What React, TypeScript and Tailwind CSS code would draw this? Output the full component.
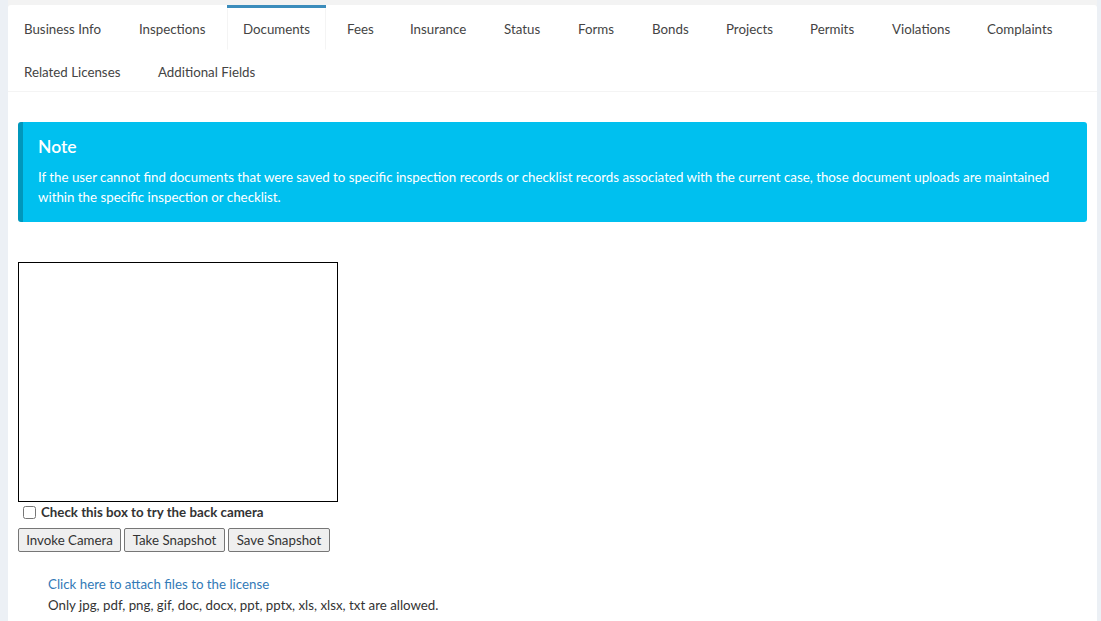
import React from "react";

type Tab = { label: string; w: number; active?: boolean };

const tabs: Tab[] = [
  { label: "Business Info", w: 110 },
  { label: "Inspections", w: 99 },
  { label: "Documents", w: 99, active: true },
  { label: "Fees", w: 58 },
  { label: "Insurance", w: 89 },
  { label: "Status", w: 69 },
  { label: "Forms", w: 69 },
  { label: "Bonds", w: 69 },
  { label: "Projects", w: 79 },
  { label: "Permits", w: 77 },
  { label: "Violations", w: 90 },
  { label: "Complaints", w: 99 },
  { label: "Related Licenses", w: 129 },
  { label: "Additional Fields", w: 130 },
];

export default function App() {
  return (
    <div className="flex min-h-[621px] w-[1101px] bg-[#ecf0f5] font-[Lato,sans-serif] text-[13.3px] text-[#333]">
      <div className="w-[8px] shrink-0" />
      <div className="flex w-[1089px] flex-col bg-[#f3f3f3] pt-[5px]">
        <div className="flex-1 rounded-t-[3px] bg-white">
          <ul className="flex flex-wrap gap-x-[5px] border-b border-[#f4f4f4]">
            {tabs.map((t) => (
              <li
                key={t.label}
                style={{ width: t.w }}
                className={`-mb-[2px] h-[45px] border-t-[3px] ${
                  t.active ? "border-[#3c8dbc]" : "border-transparent"
                }`}
              >
                <a
                  className={`block h-[42px] whitespace-nowrap border px-[15px] py-[10px] leading-[20px] ${
                    t.active
                      ? "border-x-[#f4f4f4] border-t-transparent border-b-transparent bg-white text-[#444]"
                      : "border-transparent text-[#444]"
                  }`}
                >
                  {t.label}
                </a>
              </li>
            ))}
          </ul>
          <div className="px-[10px] pt-[30px]">
            <div className="rounded-[3px] border-l-[5px] border-[#0097bc] bg-[#00c0ef] pb-[15px] pl-[15px] pr-[30px] pt-[15px] text-white">
              <h4 className="text-[17.5px] font-semibold leading-[20px]">Note</h4>
              <p className="mt-[10px] leading-[20px]">
                If the user cannot find documents that were saved to specific inspection records or checklist records associated with the current case, those document uploads are maintained within the specific inspection or checklist.
              </p>
            </div>
            <div className="mt-[40px] h-[240px] w-[320px] border border-black" />
            <label className="flex h-[20px] items-center font-bold leading-[20px]">
              <input type="checkbox" className="ml-[5px] mr-[5px] h-[13px] w-[13px]" />
              Check this box to try the back camera
            </label>
            <div className="mt-[6px] flex gap-[3px]">
              <button className="h-[24px] w-[103px] rounded-[2px] border border-[#767676] bg-[#efefef] text-[13.3px] leading-[20px] text-[#333]">
                Invoke Camera
              </button>
              <button className="h-[24px] w-[101px] rounded-[2px] border border-[#767676] bg-[#efefef] text-[13.3px] leading-[20px] text-[#333]">
                Take Snapshot
              </button>
              <button className="h-[24px] w-[102px] rounded-[2px] border border-[#767676] bg-[#efefef] text-[13.3px] leading-[20px] text-[#333]">
                Save Snapshot
              </button>
            </div>
            <div className="mt-[22px] pl-[30px] leading-[21px]">
              <a className="block text-[#337ab7]">Click here to attach files to the license</a>
              <div>Only jpg, pdf, png, gif, doc, docx, ppt, pptx, xls, xlsx, txt are allowed.</div>
            </div>
          </div>
        </div>
      </div>
      <div className="flex-1" />
    </div>
  );
}
